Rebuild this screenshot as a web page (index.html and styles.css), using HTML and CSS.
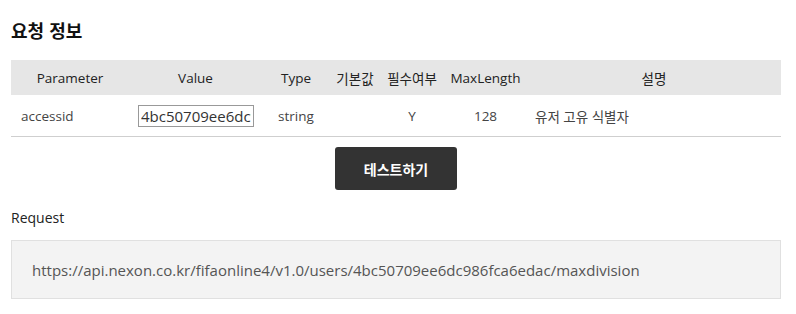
FILE: index.html
```html
<!DOCTYPE html>
<html lang="ko">
<head>
  <meta charset="UTF-8">
  <meta name="viewport" content="width=device-width, initial-scale=1.0">
  <title>요청 정보</title>
  <link rel="stylesheet" href="styles.css">
</head>
<body>

  <div id="container">
    <h2 class="title">요청 정보</h2>

    <table class="params">
      <colgroup>
        <col class="c-param">
        <col class="c-value">
        <col class="c-type">
        <col class="c-default">
        <col class="c-required">
        <col class="c-max">
        <col class="c-desc">
      </colgroup>
      <thead>
        <tr>
          <th>Parameter</th>
          <th>Value</th>
          <th>Type</th>
          <th>기본값</th>
          <th>필수여부</th>
          <th>MaxLength</th>
          <th>설명</th>
        </tr>
      </thead>
      <tbody>
        <tr>
          <td class="left">accessid</td>
          <td class="left value"><input type="text" id="accessid" value="4bc50709ee6dc986fca6edac"></td>
          <td>string</td>
          <td></td>
          <td>Y</td>
          <td>128</td>
          <td class="left desc">유저 고유 식별자</td>
        </tr>
      </tbody>
    </table>

    <div class="actions">
      <button type="button" class="test-btn">테스트하기</button>
    </div>

    <p class="label">Request</p>
    <div class="request">https://api.nexon.co.kr/fifaonline4/v1.0/users/4bc50709ee6dc986fca6edac/maxdivision</div>
  </div>

</body>
</html>
```

FILE: styles.css
```css
body {
  margin: 0;
  background-color: #fff;
  font-family: "Open Sans", "Noto Sans CJK KR", sans-serif;
  color: #222;
}

#container {
  padding: 0 15px 0 11px;
}

.title {
  margin: 0;
  padding-top: 17px;
  height: 60px;
  box-sizing: border-box;
  font-size: 18px;
  font-weight: bold;
  font-family: "Noto Sans CJK KR", sans-serif;
  line-height: 26px;
  color: #111;
}

.params {
  width: 770px;
  border-collapse: collapse;
  table-layout: fixed;
  font-size: 13.5px;
}

.c-param { width: 118px; }
.c-value { width: 133px; }
.c-type { width: 68px; }
.c-default { width: 50px; }
.c-required { width: 64px; }
.c-max { width: 83px; }

.params th {
  height: 35px;
  padding: 0;
  background-color: #e6e6e6;
  font-weight: normal;
  color: #222;
  text-align: center;
}

.params td {
  height: 41px;
  padding: 0;
  border-bottom: 1px solid #cfcfcf;
  color: #444;
  text-align: center;
}

.params td.left {
  text-align: left;
  padding-left: 10px;
}

.params td.value {
  padding-left: 9px;
}

.params td.desc {
  padding-left: 8px;
}

.params input {
  width: 116px;
  height: 22px;
  box-sizing: border-box;
  padding: 0 2px;
  border: 1px solid #999;
  font-family: "Open Sans", sans-serif;
  font-size: 15px;
  color: #333;
  outline: none;
}

.actions {
  display: flex;
  justify-content: center;
  padding-top: 10px;
}

.test-btn {
  width: 122px;
  height: 43px;
  border: none;
  border-radius: 3px;
  background-color: #333;
  color: #fff;
  font-family: "Noto Sans CJK KR", sans-serif;
  font-size: 14px;
  font-weight: bold;
  cursor: pointer;
}

.label {
  margin: 0;
  padding-top: 18px;
  height: 50px;
  box-sizing: border-box;
  font-size: 14px;
  line-height: 20px;
  color: #222;
}

.request {
  height: 59px;
  box-sizing: border-box;
  padding: 0 20px;
  display: flex;
  align-items: center;
  background-color: #f3f3f3;
  border: 1px solid #e0e0e0;
  font-size: 15px;
  color: #555;
}
```
